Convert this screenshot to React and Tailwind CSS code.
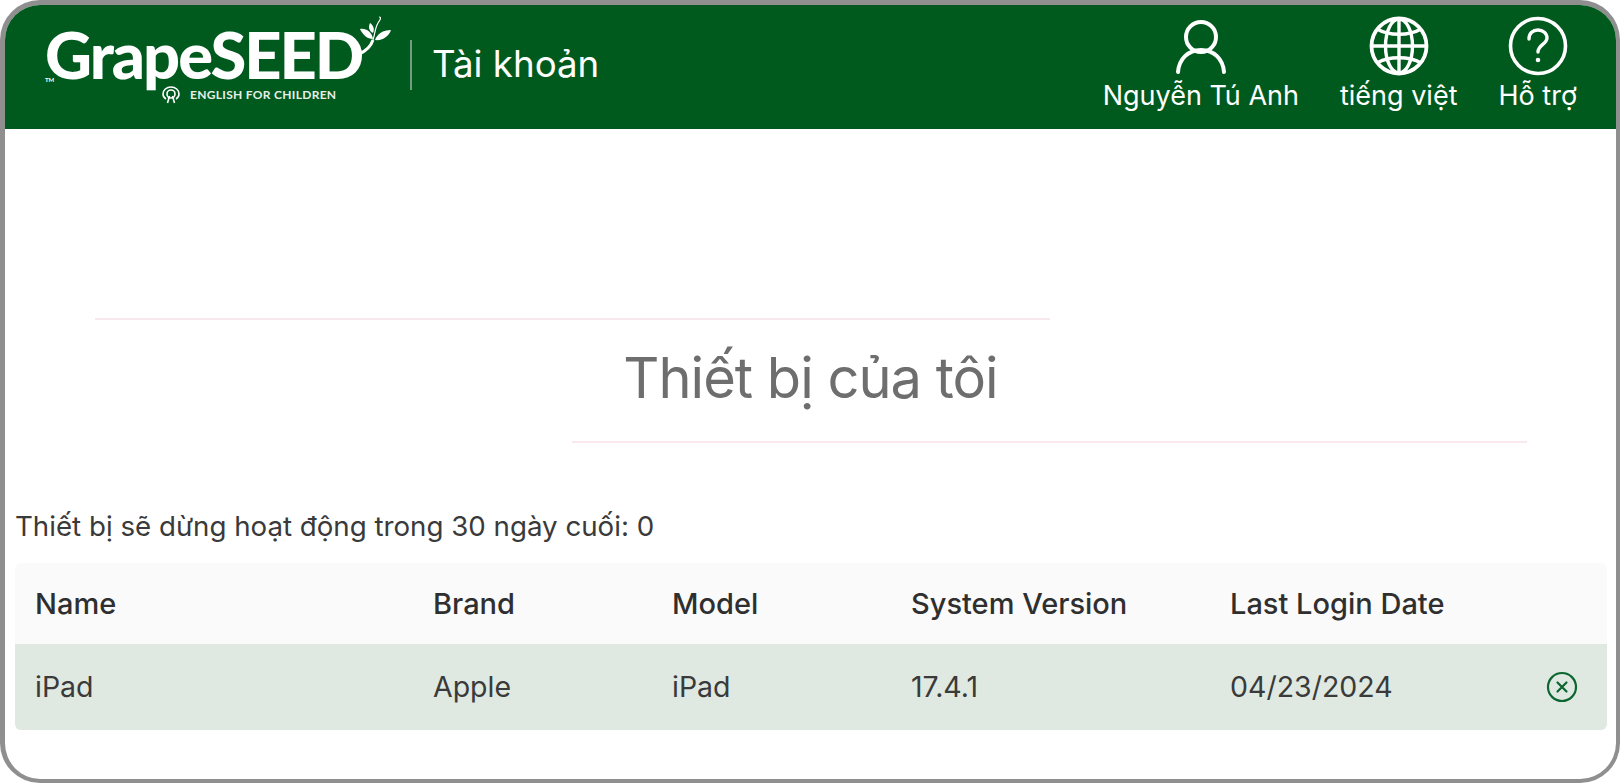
const FONT = { fontFamily: 'Inter, "Noto Sans", sans-serif' };

const columns = [
    { label: 'Name', value: 'iPad' },
    { label: 'Brand', value: 'Apple' },
    { label: 'Model', value: 'iPad' },
    { label: 'System Version', value: '17.4.1' },
    { label: 'Last Login Date', value: '04/23/2024' },
];

const UserIcon = () => (
    <svg width="52" height="58" viewBox="0 0 52 58" fill="none" stroke="white" strokeWidth="4" strokeLinecap="round">
        <circle cx="26" cy="19" r="15" />
        <path d="M3 54C4 41 13 32 26 32C39 32 48 41 49 54" />
    </svg>
);

const GlobeIcon = () => (
    <svg width="60" height="60" viewBox="0 0 60 60" fill="none" stroke="white" strokeWidth="3.4">
        <circle cx="30" cy="30" r="27.5" strokeWidth="3.8" />
        <path d="M30 3V57M3 30H57" />
        <ellipse cx="30" cy="30" rx="13.5" ry="27" />
        <path d="M8 13C20 20 40 20 52 13M8 47C20 40 40 40 52 47" />
    </svg>
);

const HelpIcon = () => (
    <svg width="60" height="60" viewBox="0 0 60 60" fill="none" stroke="white" strokeWidth="3.6" strokeLinecap="round">
        <circle cx="30" cy="30" r="27.5" />
        <path d="M21 23C21 17 25 14 30 14C35 14 39 17.5 39 22C39 28 30 29 30 36" strokeWidth="3.4" />
        <circle cx="30" cy="44" r="1.6" fill="white" strokeWidth="1.4" />
    </svg>
);

const RemoveIcon = () => (
    <svg width="32" height="32" viewBox="0 0 32 32" fill="none" stroke="#0b6630" strokeWidth="2.2" strokeLinecap="round">
        <circle cx="16" cy="16" r="14" />
        <path d="M11.5 11.5L20.5 20.5M20.5 11.5L11.5 20.5" />
    </svg>
);

const RadioMark = () => (
    <svg width="18" height="20" viewBox="0 0 18 20" fill="none" stroke="white" strokeWidth="1.6">
        <path d="M4 14C1.5 12.5 1 10.5 1 9C1 5 4.5 2 9 2C13.5 2 17 5 17 9C17 10.5 16.5 12.5 14 14" />
        <circle cx="9" cy="9" r="4" />
        <path d="M7.5 11L5.5 18M10.5 11L12.5 18" />
    </svg>
);

const Sprout = () => (
    <svg className="absolute left-[310px] top-[-15px]" width="40" height="44" viewBox="0 0 40 44" fill="none">
        <path d="M4 40C11 37 16 32 18 26" stroke="white" strokeWidth="3" />
        <path d="M18 26C20 20 20 14 23 9C25 6 27 3 24 3" stroke="white" strokeWidth="1.2" />
        <path d="M18 25C12 25 8 21 5 15C11 14 17 18 18 25Z" fill="white" />
        <path d="M20 26C22 20 28 16 36 16C34 22 28 27 20 26Z" fill="white" />
        <path d="M18 19C14 17 13 13 15 9C18 11 20 15 18 19Z" fill="white" />
    </svg>
);

const Logo = () => (
    <div className="relative w-[348px] h-[76px] text-white">
        <Sprout />
        <p className="absolute left-0 top-[3px] whitespace-nowrap text-[65px] leading-[44px] font-black tracking-[-2px]" style={{ fontFamily: 'Lato, sans-serif' }}>
            GrapeSEED
        </p>
        <span className="absolute left-0 top-[48px] text-[6px] leading-[6px] font-bold" style={{ fontFamily: 'Lato, sans-serif' }}>TM</span>
        <div className="absolute left-[117px] top-[56px] flex items-center gap-[10px]">
            <RadioMark />
            <span className="text-[12px] leading-[14px] font-bold tracking-[0.3px] whitespace-nowrap text-[#e6efe9]" style={{ fontFamily: 'Lato, sans-serif' }}>ENGLISH FOR CHILDREN</span>
        </div>
    </div>
);

const NavItem = ({ icon, label }) => (
    <div className="flex flex-col items-center">
        <div className="h-[60px] flex items-end justify-center">{icon}</div>
        <span className="text-[27px] leading-[34px] text-white whitespace-nowrap mt-[3px]">{label}</span>
    </div>
);

export default function App() {
    return (
        <div className="w-[1620px] h-[783px] bg-white overflow-hidden" style={FONT}>
            <div className="h-full rounded-[40px] border-[#8f8f8f] border-t-[5px] border-l-[5px] border-r-[4px] border-b-[4px] overflow-hidden">

                {/* Header */}
                <header className="h-[124px] bg-[#005a1e] flex items-center justify-between pl-[40px] pr-[39px]">
                    <div className="flex items-center">
                        <Logo />
                        <div className="w-[2px] h-[50px] bg-[#6f9f80] ml-[17px] mr-[20px] mb-[4px]" />
                        <span className="text-[36.7px] text-white leading-none pb-[6px]">Tài khoản</span>
                    </div>
                    <div className="flex items-start gap-[41px] pb-[6px]">
                        <NavItem icon={<UserIcon />} label="Nguyễn Tú Anh" />
                        <NavItem icon={<GlobeIcon />} label="tiếng việt" />
                        <NavItem icon={<HelpIcon />} label="Hỗ trợ" />
                    </div>
                </header>

                {/* Content */}
                <main className="px-[10px]">
                    <div className="h-[2px] w-[955px] ml-[80px] mt-[189px] bg-[#f9e9ee]" />
                    <h1 className="h-[121px] flex items-center justify-center text-[56px] tracking-[-1px] text-[#6e6e6e] font-normal pb-[6px]">
                        Thiết bị của tôi
                    </h1>
                    <div className="h-[2px] w-[955px] ml-[557px] bg-[#f9e9ee]" />

                    <p className="mt-[65px] h-[37px] text-[27.7px] leading-[37px] text-[#3a3a3a] font-normal whitespace-nowrap">
                        Thiết bị sẽ dừng hoạt động trong 30 ngày cuối: 0
                    </p>

                    <div className="mt-[18px] w-[1592px] rounded-[6px] overflow-hidden">
                        <div className="h-[81px] bg-[#fafafa] grid grid-cols-[398px_239px_239px_319px_1fr] items-center pl-[20px] text-[29px] text-[#2f2f2f] font-[450]">
                            {columns.map(c => <span key={c.label}>{c.label}</span>)}
                        </div>
                        <div className="relative h-[86px] bg-[#dfe9e1] grid grid-cols-[398px_239px_239px_319px_1fr] items-center pl-[20px] text-[28.5px] text-[#3a3a3a]">
                            {columns.map(c => <span key={c.label}>{c.value}</span>)}
                            <button className="absolute right-[29px] top-[27px]"><RemoveIcon /></button>
                        </div>
                    </div>
                </main>
            </div>
        </div>
    );
}
